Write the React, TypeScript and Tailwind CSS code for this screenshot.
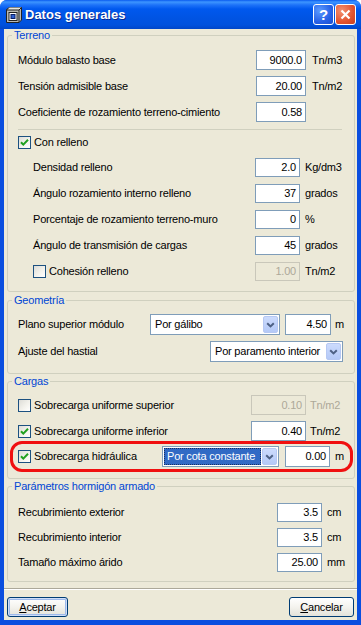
import React from "react";

function Check({ checked }: { checked: boolean }) {
  return (
    <div className="w-[13px] h-[13px] shrink-0 border border-[#1C5180] bg-[linear-gradient(135deg,#DCDCD7_0%,#F3F2EC_55%,#FFFFFF_100%)] flex items-center justify-center">
      {checked && (
        <svg width="11" height="11" viewBox="0 0 11 11">
          <path d="M2 5.2 L4.3 7.6 L9 2.8" fill="none" stroke="#21A121" strokeWidth="2" />
        </svg>
      )}
    </div>
  );
}

function Box({ value, w, disabled }: { value: string; w: string; disabled?: boolean }) {
  return (
    <div
      className={`${w} h-full shrink-0 border flex items-center justify-end pr-[3px] ${
        disabled ? "border-[#C9C7BA] bg-[#ECE9D8] text-[#ACA899]" : "border-[#7F9DB9] bg-white text-black"
      }`}
    >
      {value}
    </div>
  );
}

function Combo({ text, w, selected }: { text: string; w: string; selected?: boolean }) {
  return (
    <div className={`${w} h-full shrink-0 border border-[#7F9DB9] bg-white flex items-stretch p-[1px]`}>
      {selected ? (
        <div className="flex-1 mr-[1px] flex items-center pl-[2px] bg-[#316AC5] text-white border border-dotted border-[#1A2F60]">
          {text}
        </div>
      ) : (
        <div className="flex-1 flex items-center pl-[3px]">{text}</div>
      )}
      <div className="w-[15px] rounded-[2px] border border-[#B6C8F3] bg-[linear-gradient(#CCDBFD,#B4C9F7)] flex items-center justify-center">
        <svg width="9" height="6" viewBox="0 0 9 6">
          <path d="M1.2 1.2 L4.5 4.4 L7.8 1.2" fill="none" stroke="#4D6185" strokeWidth="2" />
        </svg>
      </div>
    </div>
  );
}

function Group({ title, className, children }: { title: string; className: string; children: React.ReactNode }) {
  return (
    <fieldset className={`ml-[3px] mr-[2px] border border-[#D0D0BF] rounded-[3px] p-0 ${className}`}>
      <legend className="ml-[4px] px-[2px] leading-[12px] text-[#0046D5]">{title}</legend>
      {children}
    </fieldset>
  );
}

function Row({ label, value, unit, inputW, unitW, h, indent, disabled }: {
  label: string; value: string; unit: string; inputW: string; unitW: string; h: string; indent?: boolean; disabled?: boolean;
}) {
  return (
    <div className={`flex items-center ${h}`}>
      <span className={`flex-1 ${indent ? "pl-[15px]" : ""}`}>{label}</span>
      <Box value={value} w={inputW} disabled={disabled} />
      <span className={`${unitW} ${disabled ? "text-[#ACA899]" : ""}`}>{unit}</span>
    </div>
  );
}

function Button({ label, w, isDefault }: { label: string; w: string; isDefault?: boolean }) {
  return (
    <div
      className={`${w} h-[20px] rounded-[3px] border border-[#003C74] bg-[linear-gradient(#FFFFFF_0%,#F4F3EE_50%,#E3E2DA_100%)] flex items-center justify-center ${
        isDefault ? "shadow-[inset_0_0_0_1px_#CEDDF8,inset_0_0_0_2px_#9DB9EB]" : ""
      }`}
    >
      <span>
        <u>{label[0]}</u>
        {label.slice(1)}
      </span>
    </div>
  );
}

export default function App() {
  return (
    <div className="w-[361px] h-[625px] bg-white font-['Liberation_Sans',Arial,sans-serif] text-[11px] tracking-[-0.2px] text-black">
      <div className="w-full h-full rounded-t-[7px] bg-[#0A4EDF] flex flex-col pb-[5px] overflow-hidden">
        {/* title bar */}
        <div className="h-[29px] shrink-0 flex items-center bg-[linear-gradient(#0A5BEF_0px,#3D95FF_2px,#1D72F8_5px,#0058EE_9px,#0054E3_18px,#0051DD_25px,#0046C8_29px)]">
          <svg className="ml-[6px]" width="16" height="16" viewBox="0 0 16 16">
            <path d="M3 0.5 H15.5 V13 L13 15.5 H0.5 V3 Z" fill="#B9B9B4" stroke="#222" strokeWidth="1" />
            <path d="M3 0.5 L0.5 3 H13 L15.5 0.5" fill="#E6E6E0" stroke="#222" strokeWidth="1" />
            <path d="M13 3 V15.5" stroke="#222" strokeWidth="1" />
            <rect x="3" y="5.5" width="8" height="8" fill="#fff" stroke="#222" />
            <rect x="5" y="7.5" width="4" height="4" fill="#2D5FD0" stroke="#0B1F66" />
          </svg>
          <span className="ml-[3px] text-white font-bold text-[13px] tracking-normal [text-shadow:1px_1px_#0B2A8F]">Datos generales</span>
          <div className="ml-auto mr-[5px] flex gap-[1px]">
            <div className="w-[21px] h-[21px] rounded-[3px] border border-white bg-[radial-gradient(circle_at_30%_30%,#5C9BFF,#2761E6_60%,#1A4FD0)] flex items-center justify-center text-white font-bold text-[15px] leading-none">
              ?
            </div>
            <div className="w-[21px] h-[21px] rounded-[3px] border border-white bg-[radial-gradient(circle_at_30%_30%,#F39070,#E2532F_60%,#C8401E)] flex items-center justify-center">
              <svg width="11" height="11" viewBox="0 0 11 11">
                <path d="M1.5 1.5 L9.5 9.5 M9.5 1.5 L1.5 9.5" stroke="white" strokeWidth="2.2" />
              </svg>
            </div>
          </div>
        </div>

        {/* client */}
        <div className="flex-1 mx-[4px] bg-[#ECE9D8] flex flex-col">
          <Group title="Terreno" className="">
            <div className="pl-[10px] pt-[9px] pb-[10px] flex flex-col">
              <div className="flex flex-col gap-[6px]">
                <Row label="Módulo balasto base" value="9000.0" unit="Tn/m3" inputW="w-[50px]" unitW="w-[48px] pl-[6px]" h="h-[20px]" />
                <Row label="Tensión admisible base" value="20.00" unit="Tn/m2" inputW="w-[50px]" unitW="w-[48px] pl-[6px]" h="h-[20px]" />
                <Row label="Coeficiente de rozamiento terreno-cimiento" value="0.58" unit="" inputW="w-[50px]" unitW="w-[48px] pl-[6px]" h="h-[20px]" />
              </div>
              <div className="mt-[7px] mr-[12px] h-px bg-[#D0D0BF]" />
              <div className="mt-[6px] h-[13px] flex items-center gap-[3px]">
                <Check checked />
                <span>Con relleno</span>
              </div>
              <div className="mt-[9px] flex flex-col gap-[7px]">
                <Row indent label="Densidad relleno" value="2.0" unit="Kg/dm3" inputW="w-[45px]" unitW="w-[54px] pl-[5px]" h="h-[19px]" />
                <Row indent label="Ángulo rozamiento interno relleno" value="37" unit="grados" inputW="w-[45px]" unitW="w-[54px] pl-[5px]" h="h-[19px]" />
                <Row indent label="Porcentaje de rozamiento terreno-muro" value="0" unit="%" inputW="w-[45px]" unitW="w-[54px] pl-[5px]" h="h-[19px]" />
                <Row indent label="Ángulo de transmisión de cargas" value="45" unit="grados" inputW="w-[45px]" unitW="w-[54px] pl-[5px]" h="h-[19px]" />
                <div className="flex items-center h-[19px]">
                  <div className="flex-1 pl-[15px] flex items-center gap-[3px]">
                    <Check checked={false} />
                    <span>Cohesión relleno</span>
                  </div>
                  <Box value="1.00" w="w-[45px]" disabled />
                  <span className="w-[54px] pl-[5px]">Tn/m2</span>
                </div>
              </div>
            </div>
          </Group>

          <Group title="Geometría" className="mt-[2px]">
            <div className="pl-[10px] pt-[8px] pb-[11px] flex flex-col gap-[6px]">
              <div className="flex items-center h-[21px]">
                <span className="flex-1">Plano superior módulo</span>
                <Combo text="Por gálibo" w="w-[130px]" />
                <div className="ml-[5px] h-full flex">
                  <Box value="4.50" w="w-[46px]" />
                </div>
                <span className="w-[23px] pl-[4px]">m</span>
              </div>
              <div className="flex items-center h-[21px]">
                <span className="flex-1">Ajuste del hastial</span>
                <Combo text="Por paramento interior" w="w-[133px]" />
                <span className="w-[11px]" />
              </div>
            </div>
          </Group>

          <Group title="Cargas" className="mt-[1px]">
            <div className="pl-[10px] pt-[8px] pb-[11px] flex flex-col">
              <div className="flex items-center h-[20px]">
                <div className="flex-1 flex items-center gap-[3px]">
                  <Check checked={false} />
                  <span>Sobrecarga uniforme superior</span>
                </div>
                <Box value="0.10" w="w-[55px]" disabled />
                <span className="w-[48px] pl-[4px] text-[#ACA899]">Tn/m2</span>
              </div>
              <div className="mt-[6px] flex items-center h-[20px]">
                <div className="flex-1 flex items-center gap-[3px]">
                  <Check checked />
                  <span>Sobrecarga uniforme inferior</span>
                </div>
                <Box value="0.40" w="w-[55px]" />
                <span className="w-[48px] pl-[4px]">Tn/m2</span>
              </div>
              <div className="relative mt-[5px] flex items-center h-[21px]">
                <div className="flex-1 flex items-center gap-[3px]">
                  <Check checked />
                  <span>Sobrecarga hidráulica</span>
                </div>
                <Combo text="Por cota constante" w="w-[117px]" selected />
                <div className="ml-[6px] h-full flex">
                  <Box value="0.00" w="w-[45px]" />
                </div>
                <span className="w-[24px] pl-[5px]">m</span>
                <div className="absolute left-[-8px] top-[-5px] w-[343px] h-[31px] border-[3px] border-[#F01010] rounded-[12px] pointer-events-none" />
              </div>
            </div>
          </Group>

          <Group title="Parámetros hormigón armado" className="mt-[1px]">
            <div className="pl-[10px] pt-[11px] pb-[9px] flex flex-col gap-[6px]">
              <Row label="Recubrimiento exterior" value="3.5" unit="cm" inputW="w-[45px]" unitW="w-[32px] pl-[5px]" h="h-[19px]" />
              <Row label="Recubrimiento interior" value="3.5" unit="cm" inputW="w-[45px]" unitW="w-[32px] pl-[5px]" h="h-[19px]" />
              <Row label="Tamaño máximo árido" value="25.00" unit="mm" inputW="w-[45px]" unitW="w-[32px] pl-[5px]" h="h-[19px]" />
            </div>
          </Group>

          <div className="mt-[6px] h-[2px] border-t border-[#ACA899] border-b border-b-white" />
          <div className="mt-[7px] px-[3px] flex justify-between">
            <Button label="Aceptar" w="w-[61px]" isDefault />
            <Button label="Cancelar" w="w-[65px]" />
          </div>
        </div>
      </div>
    </div>
  );
}
